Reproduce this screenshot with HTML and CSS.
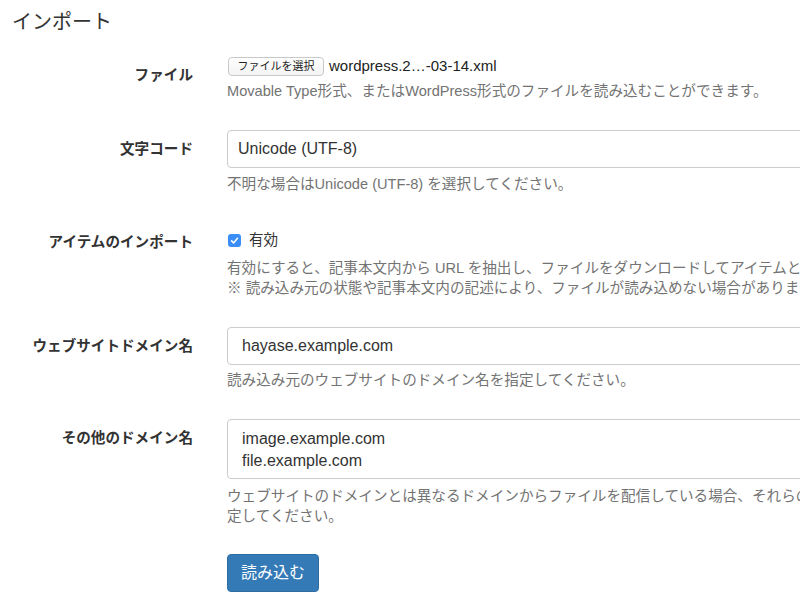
FILE: index.html
```html
<!DOCTYPE html>
<html lang="ja">
<head>
<meta charset="utf-8">
<title>インポート</title>
<link rel="stylesheet" href="styles.css">
</head>
<body>
<div class="page">
  <h1 class="title">インポート</h1>
  <form class="form">
    <div class="row">
      <label class="label">ファイル</label>
      <div class="control">
        <div class="file">
          <span class="file-btn">ファイルを選択</span>
          <span class="file-name">wordpress.2…-03-14.xml</span>
        </div>
        <p class="help">Movable Type形式、またはWordPress形式のファイルを読み込むことができます。</p>
      </div>
    </div>
    <div class="row">
      <label class="label">文字コード</label>
      <div class="control">
        <div class="input select">Unicode (UTF-8)</div>
        <p class="help help-select">不明な場合はUnicode (UTF-8) を選択してください。</p>
      </div>
    </div>
    <div class="row">
      <label class="label">アイテムのインポート</label>
      <div class="control control-check">
        <div class="check">
          <svg class="check-box" width="13" height="13" viewBox="0 0 13 13"><rect x="0" y="0" width="13" height="13" rx="3" fill="#3a8ef6"/><path d="M3.6 6.9 L5.6 8.9 L9.5 4.2" fill="none" stroke="#fff" stroke-width="1.5" stroke-linecap="round" stroke-linejoin="round"/></svg>
          <span>有効</span>
        </div>
        <p class="help help-check">有効にすると、記事本文内から URL を抽出し、ファイルをダウンロードしてアイテムとして登録します。<br>※ 読み込み元の状態や記事本文内の記述により、ファイルが読み込めない場合があります。</p>
      </div>
    </div>
    <div class="row">
      <label class="label">ウェブサイトドメイン名</label>
      <div class="control">
        <div class="input text">hayase.example.com</div>
        <p class="help">読み込み元のウェブサイトのドメイン名を指定してください。</p>
      </div>
    </div>
    <div class="row">
      <label class="label">その他のドメイン名</label>
      <div class="control">
        <div class="input textarea">image.example.com<br>file.example.com</div>
        <p class="help help-textarea">ウェブサイトのドメインとは異なるドメインからファイルを配信している場合、それらのドメイン名を指定してください。</p>
      </div>
    </div>
    <div class="row row-submit">
      <span></span>
      <div class="control">
        <button type="button" class="btn">読み込む</button>
      </div>
    </div>
  </form>
</div>
</body>
</html>
```

FILE: styles.css
```css
html, body {
  margin: 0;
  padding: 0;
  overflow: hidden;
  background: #fff;
}
body {
  font-family: "Liberation Sans", "Noto Sans CJK JP", sans-serif;
  color: #333;
  font-size: 14px;
  line-height: 20px;
}
.page {
  width: 940px;
}
.title {
  margin: 8px 0 0 12px;
  font-size: 20px;
  font-weight: normal;
  line-height: 28px;
  color: #333;
}
.form {
  margin-top: 20px;
}
.row {
  display: grid;
  grid-template-columns: 193px 695px;
  column-gap: 34px;
  margin-bottom: 29px;
}
.label {
  text-align: right;
  font-weight: bold;
  padding-top: 9px;
  line-height: 20px;
  font-size: 14.6px;
  color: #333;
  white-space: nowrap;
}
.control {
  min-width: 0;
}
.file {
  display: flex;
  align-items: center;
  height: 20px;
}
.file-btn {
  box-sizing: border-box;
  height: 19px;
  width: 96px;
  margin-left: 1px;
  border: 1px solid #c9c9c9;
  border-radius: 4px;
  background: linear-gradient(#fff, #f3f3f3);
  font-size: 11px;
  line-height: 17px;
  text-align: center;
  color: #222;
}
.file-name {
  margin-left: 5px;
  font-size: 15px;
  color: #222;
}
.help {
  margin: 5px 0 0;
  color: #737373;
  font-size: 14.6px;
  line-height: 20px;
}
.help-select {
  margin-top: 6px;
}
.help-check {
  margin-top: 8px;
}
.help-textarea {
  margin-top: 7px;
}
.input {
  box-sizing: border-box;
  width: 100%;
  border: 1px solid #ccc;
  border-radius: 4px;
  font-size: 16px;
  color: #333;
  background: #fff;
}
.select, .text {
  height: 38px;
  line-height: 36px;
}
.select {
  padding-left: 10px;
}
.text {
  padding-left: 14px;
}
.textarea {
  height: 60px;
  padding: 8px 14px;
  line-height: 22px;
}
.control-check {
  padding-top: 7px;
}
.check {
  display: flex;
  align-items: center;
  height: 20px;
  font-size: 14.6px;
}
.check-box {
  margin-left: 1px;
  margin-right: 8px;
  margin-top: 1px;
}
.row-submit {
  margin-top: -1px;
}
.btn {
  box-sizing: border-box;
  height: 38px;
  padding: 0 13px;
  border: 1px solid #2e6da4;
  border-radius: 4px;
  background: #337ab7;
  color: #fff;
  font-family: "Liberation Sans", "Noto Sans CJK JP", sans-serif;
  font-size: 16px;
  line-height: 36px;
}
```
